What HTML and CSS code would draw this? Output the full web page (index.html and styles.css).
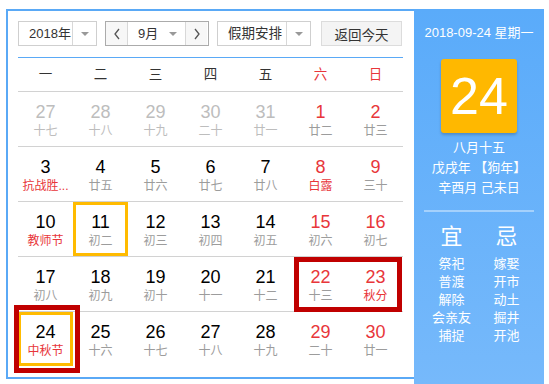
FILE: index.html
```html
<!DOCTYPE html>
<html lang="zh-CN">
<head>
  <meta charset="UTF-8" />
  <title>万年历</title>
  <link rel="stylesheet" href="styles.css">
</head>
<body>
  <div class="calendar">
    <div class="main">
      <!-- 工具栏 -->
      <div class="toolbar">
        <div class="select year">
          <span class="select-text">2018年</span>
          <span class="select-arrow"><i class="tri"></i></span>
        </div>
        <div class="month-group">
          <span class="nav"><svg width="8" height="12" viewBox="0 0 8 12"><polyline points="6,1 2,6 6,11" fill="none" stroke="#555" stroke-width="1.3"/></svg></span>
          <span class="month-text">9月<i class="tri"></i></span>
          <span class="nav"><svg width="8" height="12" viewBox="0 0 8 12"><polyline points="2,1 6,6 2,11" fill="none" stroke="#555" stroke-width="1.3"/></svg></span>
        </div>
        <div class="select holiday">
          <span class="select-text">假期安排</span>
          <span class="select-arrow"><i class="tri"></i></span>
        </div>
        <button class="today-btn">返回今天</button>
      </div>

      <!-- 星期 -->
      <div class="weekdays">
        <span>一</span><span>二</span><span>三</span><span>四</span><span>五</span>
        <span class="red">六</span><span class="red">日</span>
      </div>

      <!-- 日期 -->
      <div class="grid">
        <div class="day other"><b>27</b><small>十七</small></div>
        <div class="day other"><b>28</b><small>十八</small></div>
        <div class="day other"><b>29</b><small>十九</small></div>
        <div class="day other"><b>30</b><small>二十</small></div>
        <div class="day other"><b>31</b><small>廿一</small></div>
        <div class="day weekend"><b>1</b><small>廿二</small></div>
        <div class="day weekend"><b>2</b><small>廿三</small></div>

        <div class="day"><b>3</b><small class="fest">抗战胜...</small></div>
        <div class="day"><b>4</b><small>廿五</small></div>
        <div class="day"><b>5</b><small>廿六</small></div>
        <div class="day"><b>6</b><small>廿七</small></div>
        <div class="day"><b>7</b><small>廿八</small></div>
        <div class="day weekend"><b>8</b><small class="fest">白露</small></div>
        <div class="day weekend"><b>9</b><small>三十</small></div>

        <div class="day"><b>10</b><small class="fest">教师节</small></div>
        <div class="day picked"><b>11</b><small>初二</small></div>
        <div class="day"><b>12</b><small>初三</small></div>
        <div class="day"><b>13</b><small>初四</small></div>
        <div class="day"><b>14</b><small>初五</small></div>
        <div class="day weekend"><b>15</b><small>初六</small></div>
        <div class="day weekend"><b>16</b><small>初七</small></div>

        <div class="day"><b>17</b><small>初八</small></div>
        <div class="day"><b>18</b><small>初九</small></div>
        <div class="day"><b>19</b><small>初十</small></div>
        <div class="day"><b>20</b><small>十一</small></div>
        <div class="day"><b>21</b><small>十二</small></div>
        <div class="day weekend"><b>22</b><small>十三</small></div>
        <div class="day weekend"><b>23</b><small class="fest">秋分</small></div>

        <div class="day picked"><b>24</b><small class="fest">中秋节</small></div>
        <div class="day"><b>25</b><small>十六</small></div>
        <div class="day"><b>26</b><small>十七</small></div>
        <div class="day"><b>27</b><small>十八</small></div>
        <div class="day"><b>28</b><small>十九</small></div>
        <div class="day weekend"><b>29</b><small>二十</small></div>
        <div class="day weekend"><b>30</b><small>廿一</small></div>

        <!-- 红框标注 -->
        <div class="mark mark-weekend"></div>
        <div class="mark mark-today"></div>
      </div>
    </div>

    <!-- 右侧详情 -->
    <div class="panel">
      <div class="panel-date">2018-09-24 星期一</div>
      <div class="big-day">24</div>
      <div class="lunar">
        <p>八月十五</p>
        <p>戊戌年 【狗年】</p>
        <p>辛酉月 己未日</p>
      </div>
      <div class="divider"></div>
      <div class="almanac">
        <div class="almanac-col">
          <h3>宜</h3>
          <p>祭祀</p><p>普渡</p><p>解除</p><p>会亲友</p><p>捕捉</p>
        </div>
        <div class="almanac-col">
          <h3>忌</h3>
          <p>嫁娶</p><p>开市</p><p>动土</p><p>掘井</p><p>开池</p>
        </div>
      </div>
    </div>
  </div>
</body>
</html>
```

FILE: styles.css
```css
body {
  margin: 0;
  background: #fff;
  font-family: "Liberation Sans", "Noto Sans CJK SC", sans-serif;
  color: #333;
}

.calendar {
  display: flex;
  align-items: flex-start;
  margin: 9px 0 0 6px;
}

.main {
  width: 408px;
  height: 370px;
  box-sizing: border-box;
  border: 2px solid #5aa9f6;
  border-right: none;
  padding: 10px 11px 0 10px;
}

/* 工具栏 */
.toolbar {
  display: flex;
  height: 25px;
  margin-bottom: 11px;
  font-size: 13px;
}

.select {
  display: flex;
  box-sizing: border-box;
  height: 25px;
  border: 1px solid #cfcfcf;
  margin-right: 8px;
}

.select.year { width: 79px; }
.select.holiday { width: 94px; margin-right: 10px; }

.select-text {
  flex: 1;
  line-height: 23px;
  padding-left: 10px;
  color: #333;
}

.select.holiday .select-text { padding-left: 10px; font-size: 13.5px; }

.select-arrow {
  width: 23px;
  border-left: 1px solid #d8d8d8;
  display: flex;
  align-items: center;
  justify-content: center;
}

.tri {
  display: inline-block;
  width: 0;
  height: 0;
  border-left: 4px solid transparent;
  border-right: 4px solid transparent;
  border-top: 4px solid #999;
}

.month-group {
  display: flex;
  box-sizing: border-box;
  width: 104px;
  height: 25px;
  border: 1px solid #ababab;
  margin-right: 8px;
}

.nav {
  width: 21px;
  display: flex;
  align-items: center;
  justify-content: center;
  background: #f7f7f7;
}

.month-text {
  width: 59px;
  border-left: 1px solid #d8d8d8;
  border-right: 1px solid #d8d8d8;
  line-height: 23px;
  padding-left: 10px;
  box-sizing: border-box;
  display: flex;
  align-items: center;
  justify-content: space-between;
  padding-right: 8px;
}

.today-btn {
  width: 81px;
  height: 25px;
  border: 1px solid #dcdcdc;
  background: #f4f4f4;
  font-family: inherit;
  font-size: 13.5px;
  color: #333;
  padding: 0;
}

/* 星期 */
.weekdays {
  display: grid;
  grid-template-columns: repeat(7, 55px);
  border-top: 1px solid #5aa9f6;
  height: 33px;
  line-height: 33px;
  text-align: center;
  font-size: 13.5px;
  color: #333;
}

.weekdays .red { color: #e8363a; }

/* 日期格子 */
.grid {
  position: relative;
  display: grid;
  grid-template-columns: repeat(7, 55px);
}

.day {
  height: 55px;
  box-sizing: border-box;
  border-top: 1px solid #d2d2d2;
  text-align: center;
  padding-top: 10px;
}

.day b {
  display: block;
  font-weight: normal;
  font-size: 18px;
  line-height: 20px;
  color: #000;
}

.day small {
  display: block;
  font-size: 12px;
  line-height: 18px;
  color: #9c9c9c;
  white-space: nowrap;
}

.day.weekend b { color: #e8363a; }
.day.other b { color: #bdbdbd; }
.day.other small { color: #bdbdbd; }
.day small.fest { color: #e8363a; }

.day.picked {
  box-shadow: inset 1px 0 0 #fff, inset -1px 0 0 #fff, inset 0 0 0 4px #ffbb00;
  box-shadow: inset 0 0 0 3px #ffbb00;
}

.mark {
  position: absolute;
  border: 5px solid #c00000;
  box-sizing: border-box;
}

.mark-weekend {
  left: 276px;
  top: 166px;
  width: 108px;
  height: 55px;
}

.mark-today {
  left: -4px;
  top: 214px;
  width: 66px;
  height: 68px;
}

/* 右侧 */
.panel {
  width: 130px;
  height: 375px;
  box-sizing: border-box;
  padding-top: 14px;
  background: linear-gradient(#5aabfa, #76b9fb);
  color: #fff;
  text-align: center;
}

.panel-date {
  font-size: 13px;
  line-height: 20px;
}

.big-day {
  width: 76px;
  height: 74px;
  margin: 16px auto 0;
  background: #ffb800;
  border-radius: 3px;
  box-shadow: 0 2px 3px rgba(0, 0, 0, 0.2);
  font-size: 52px;
  line-height: 74px;
}

.lunar { margin-top: 5px; }

.lunar p {
  margin: 0;
  font-size: 13px;
  line-height: 20px;
}

.divider {
  width: 110px;
  height: 2px;
  margin: 12px auto 0;
  background: rgba(255, 255, 255, 0.4);
}

.almanac {
  display: flex;
  justify-content: center;
  margin-top: 11px;
}

.almanac-col { width: 55px; }

.almanac h3 {
  margin: 0 0 4px;
  font-size: 22px;
  line-height: 28px;
  font-weight: normal;
}

.almanac p {
  margin: 0;
  font-size: 13px;
  line-height: 18px;
}
```
